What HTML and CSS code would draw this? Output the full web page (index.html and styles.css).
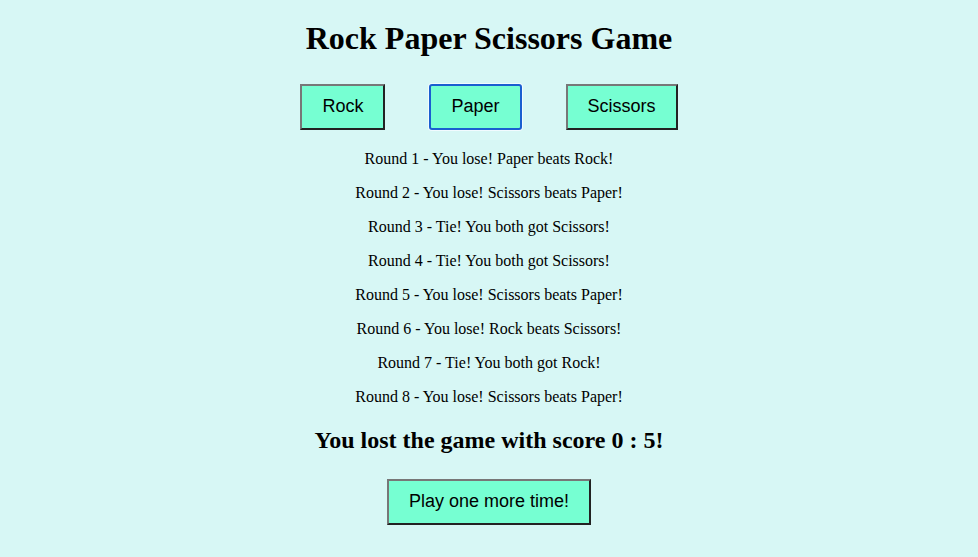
FILE: index.html
```html
<!DOCTYPE html>
<html>
<head>
<meta charset="utf-8">
<title>Rock Paper Scissors Game</title>
<link rel="stylesheet" href="styles.css">
</head>
<body>
<div class="game">
  <h1 class="title">Rock Paper Scissors Game</h1>
  <div class="choices">
    <button class="btn">Rock</button>
    <button class="btn focused">Paper</button>
    <button class="btn">Scissors</button>
  </div>
  <div class="log">
    <p class="round">Round 1 - You lose! Paper beats Rock!</p>
    <p class="round">Round 2 - You lose! Scissors beats Paper!</p>
    <p class="round">Round 3 - Tie! You both got Scissors!</p>
    <p class="round">Round 4 - Tie! You both got Scissors!</p>
    <p class="round">Round 5 - You lose! Scissors beats Paper!</p>
    <p class="round">Round 6 - You lose! Rock beats Scissors!</p>
    <p class="round">Round 7 - Tie! You both got Rock!</p>
    <p class="round">Round 8 - You lose! Scissors beats Paper!</p>
  </div>
  <h2 class="result">You lost the game with score 0 : 5!</h2>
  <div class="again">
    <button class="btn">Play one more time!</button>
  </div>
</div>
</body>
</html>
```

FILE: styles.css
```css
html, body {
  background: #d7f7f5;
}
body {
  margin: 0;
  font-family: "Liberation Serif", "Times New Roman", serif;
  font-size: 16px;
  color: #000;
}
.game {
  display: flex;
  flex-direction: column;
  align-items: center;
  padding-top: 20px;
}
.title {
  margin: 0;
  font-size: 32px;
  font-weight: bold;
  line-height: 37px;
}
.choices {
  display: flex;
  gap: 44px;
  margin-top: 27px;
}
.btn {
  font-family: "Liberation Sans", Arial, sans-serif;
  font-size: 18px;
  line-height: 21px;
  padding: 10px 20px 11px;
  background: #76ffd2;
  color: #000;
  border-style: solid;
  border-width: 2px;
  border-color: #777 #222 #222 #777;
  border-radius: 0;
}
.btn.focused {
  border-color: #1a5fd0;
  border-radius: 3px;
  box-shadow: 0 0 0 1px #f2fbff;
}
.log {
  display: flex;
  flex-direction: column;
  align-items: center;
  margin-top: 20px;
}
.round {
  margin: 0 0 16px 0;
  line-height: 18px;
}
.result {
  margin: 4px 0 0 0;
  font-size: 24px;
  font-weight: bold;
  line-height: 28px;
}
.again {
  margin-top: 25px;
}
```
